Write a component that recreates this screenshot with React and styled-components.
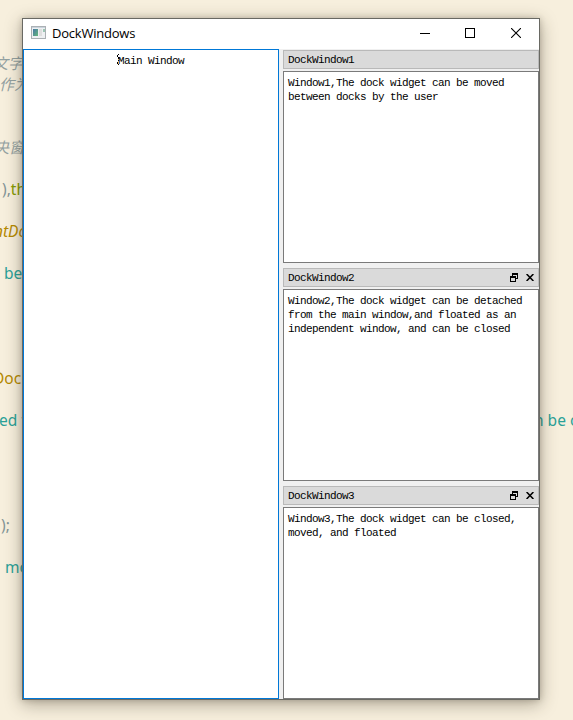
import React from "react";
import styled, { createGlobalStyle } from "styled-components";

const GlobalStyle = createGlobalStyle`
  * { box-sizing: border-box; }
  body { margin: 0; overflow: hidden; }
`;

const Desktop = styled.div`
  display: grid;
  width: 573px;
  height: 720px;
  overflow: hidden;
  background: #f7efdd;
`;

const Editor = styled.div`
  grid-area: 1 / 1;
  padding-top: 53px;
  overflow: hidden;
  font: 16px/21px "Noto Sans", "Noto Sans CJK SC", sans-serif;
`;

const CodeLine = styled.div`
  display: flex;
  height: 21px;
  margin-left: ${(p) => p.$shift || 0}px;
  white-space: pre;
  color: ${(p) => p.$color || "#839496"};
  font-size: ${(p) => p.$size || 15.5}px;
  font-style: ${(p) => (p.$italic ? "italic" : "normal")};
`;

const Token = styled.span`
  color: ${(p) => p.$color};
`;

const LineEnd = styled.span`
  width: 39px;
  margin-left: auto;
  flex: none;
`;

const Window = styled.section`
  grid-area: 1 / 1;
  display: flex;
  flex-direction: column;
  width: 518px;
  height: 682px;
  margin: 18px 0 0 22px;
  border: 1px solid #696963;
  background: #f0f0f0;
  box-shadow: 0 4px 16px rgba(50, 43, 25, 0.38), 0 0 6px rgba(50, 43, 25, 0.2);
  z-index: 1;
`;

const TitleBar = styled.header`
  display: flex;
  align-items: center;
  flex: none;
  height: 30px;
  padding: 0 0 2px 8px;
  background: #fff;
  color: #000;
  font: 13px/28px "Open Sans", sans-serif;
`;

const Title = styled.span`
  flex: 1;
  margin-left: 6px;
  letter-spacing: -0.22px;
`;

const CaptionButton = styled.button`
  display: grid;
  place-items: center;
  width: 46px;
  height: 28px;
  padding: 0 0 0 ${(p) => p.$inset || 0}px;
  border: 0;
  background: none;
`;

const Body = styled.main`
  display: grid;
  grid-template-columns: 256px 256px;
  column-gap: 4px;
  flex: 1;
  min-height: 0;
`;

const textStyle = `
  margin: 0;
  white-space: pre;
  color: #000;
  font: 11px/14px "Liberation Mono", monospace;
  letter-spacing: -0.601px;
`;

const CentralText = styled.div`
  ${textStyle}
  display: flex;
  justify-content: center;
  padding-top: 4px;
  border: 1px solid #0078d7;
  background: #fff;
`;

const Caret = styled.svg`
  width: 4px;
  height: 12px;
  margin: 0 -3px 0 -1px;
`;

const DockColumn = styled.aside`
  display: flex;
  flex-direction: column;
  gap: 5px;
  padding-top: 1px;
`;

const Dock = styled.section`
  display: grid;
  grid-template-rows: 19px 192px;
  row-gap: 2px;
`;

const DockTitle = styled.header`
  ${textStyle}
  display: flex;
  align-items: center;
  padding: 0 2px 0 4px;
  border: 1px solid #b9b9b9;
  background: #dadada;
`;

const DockName = styled.span`
  flex: 1;
  padding-top: 1px;
`;

const DockButton = styled.button`
  display: grid;
  place-items: center;
  width: 12px;
  height: 12px;
  margin-left: 4px;
  padding: 0;
  border: 0;
  background: none;
`;

const DockText = styled.pre`
  ${textStyle}
  padding: 4px;
  border: 1px solid #7a7a7a;
  background: #fff;
`;

const AppIcon = () => (
  <svg width="15" height="14" viewBox="0 0 15 14" shapeRendering="crispEdges">
    <defs>
      <linearGradient id="pane" x2="1" y2="1">
        <stop stopColor="#4777a5" />
        <stop offset="1" stopColor="#65b77b" />
      </linearGradient>
    </defs>
    <rect x=".5" y=".5" width="14" height="12" fill="#eef0f2" stroke="#abb0b4" />
    <path d="M1 1.5h13" stroke="#c9d3dc" />
    <rect x="2" y="3" width="5" height="7" fill="url(#pane)" />
    <rect x="8" y="3" width="3" height="7" fill="#dedede" />
    <rect x="12" y="3" width="2" height="3" fill="#9ac5b3" />
  </svg>
);

const MinimizeIcon = () => (
  <svg width="10" height="10" shapeRendering="crispEdges">
    <path d="M0 5.5h10" stroke="#000" />
  </svg>
);

const MaximizeIcon = () => (
  <svg width="10" height="10" shapeRendering="crispEdges">
    <rect x=".5" y=".5" width="9" height="9" fill="none" stroke="#000" />
  </svg>
);

const CloseIcon = () => (
  <svg width="10" height="10">
    <path d="M0 0l10 10M10 0L0 10" stroke="#000" strokeWidth="1.1" />
  </svg>
);

const FloatIcon = () => (
  <svg width="8" height="9" shapeRendering="crispEdges" fill="none" stroke="#000">
    <path d="M2.5 4V.5h5v5H6M2 1.5h6" />
    <path d="M.5 3.5h5v5h-5zM0 4.5h6" />
  </svg>
);

const DockCloseIcon = () => (
  <svg width="8" height="7" viewBox="0 0 8 7">
    <path d="M.6 0l6.8 7M7.4 0L.6 7" stroke="#000" strokeWidth="1.55" />
  </svg>
);

const lines = {
  0: { text: "文字", italic: true, color: "#93a1a1", shift: -7, size: 15 },
  1: { text: "作为", italic: true, color: "#93a1a1", shift: -1, size: 15 },
  4: { text: "央窗", italic: true, color: "#93a1a1", shift: -6, size: 15 },
  6: { text: "),", next: "this", color: "#839496", nextColor: "#859900", shift: 2 },
  8: { text: "ntDock", italic: true, color: "#b58900", shift: -6 },
  10: { text: "be moved", color: "#2aa198", shift: 4 },
  15: { text: "Dock", color: "#b58900", shift: -7 },
  17: { text: "ed from", color: "#2aa198", shift: -1, end: "n be closed" },
  22: { text: ");", color: "#839496", shift: 1 },
  24: { text: "moved", color: "#2aa198", shift: 5 },
};

const docks = [
  {
    name: "DockWindow1",
    text: "Window1,The dock widget can be moved\nbetween docks by the user",
  },
  {
    name: "DockWindow2",
    controls: true,
    text: "Window2,The dock widget can be detached\nfrom the main window,and floated as an\nindependent window, and can be closed",
  },
  {
    name: "DockWindow3",
    controls: true,
    text: "Window3,The dock widget can be closed,\nmoved, and floated",
  },
];

export default function App() {
  return (
    <Desktop>
      <GlobalStyle />
      <Editor>
        {Array.from({ length: 25 }, (_, i) => {
          const line = lines[i] || {};
          return (
            <CodeLine key={i} $shift={line.shift} $color={line.color} $size={line.size} $italic={line.italic}>
              {line.text}
              {line.next && <Token $color={line.nextColor}>{line.next}</Token>}
              {line.end && <LineEnd>{line.end}</LineEnd>}
            </CodeLine>
          );
        })}
      </Editor>
      <Window>
        <TitleBar>
          <AppIcon />
          <Title>DockWindows</Title>
          <CaptionButton aria-label="Minimize" $inset={2}><MinimizeIcon /></CaptionButton>
          <CaptionButton aria-label="Maximize"><MaximizeIcon /></CaptionButton>
          <CaptionButton aria-label="Close"><CloseIcon /></CaptionButton>
        </TitleBar>
        <Body>
          <CentralText>
            <Caret viewBox="0 0 4 12" shapeRendering="crispEdges">
              <path d="M1.5 0v1M0.5 1v2M1.5 3v2M1.5 6v1M0.5 8v2M1.5 10v1" stroke="#000" />
            </Caret>
            <span>Main Window</span>
          </CentralText>
          <DockColumn>
            {docks.map((dock) => (
              <Dock key={dock.name}>
                <DockTitle>
                  <DockName>{dock.name}</DockName>
                  {dock.controls && (
                    <>
                      <DockButton aria-label="Float"><FloatIcon /></DockButton>
                      <DockButton aria-label="Close"><DockCloseIcon /></DockButton>
                    </>
                  )}
                </DockTitle>
                <DockText>{dock.text}</DockText>
              </Dock>
            ))}
          </DockColumn>
        </Body>
      </Window>
    </Desktop>
  );
}
